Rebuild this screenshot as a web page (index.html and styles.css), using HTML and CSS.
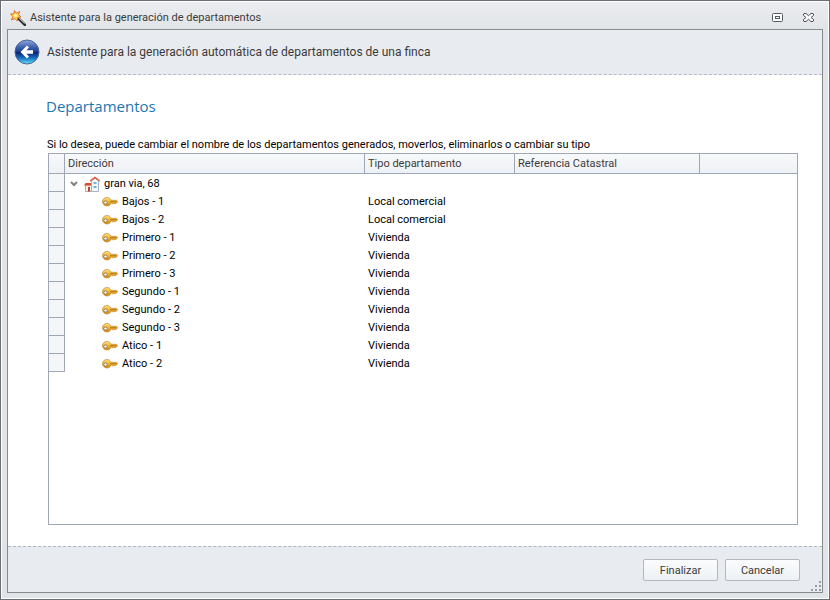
FILE: index.html
```html
<!DOCTYPE html>
<html lang="es">
<head>
    <meta charset="UTF-8">
    <title>Asistente para la generación de departamentos</title>
    <link rel="stylesheet" href="styles.css">
</head>
<body>

    <!-- shared icons -->
    <svg class="defs" width="0" height="0" aria-hidden="true">
        <defs>
            <linearGradient id="gold" x1="0" y1="0" x2="0" y2="1">
                <stop offset="0" stop-color="#fbe28a"/>
                <stop offset="0.5" stop-color="#f0b332"/>
                <stop offset="1" stop-color="#c98416"/>
            </linearGradient>
            <symbol id="key" viewBox="0 0 16 12">
                <path d="M5 1.500C2.300 1.500.5 3.300.5 5.500S2.300 10 5 10c1.900 0 3.300-1 4-2.800h.8l1 .9 1-1 1 1 1-1h.7L15.700 5.700 14.500 4.300H9C8.300 2.500 6.900 1.500 5 1.500z" fill="url(#gold)" stroke="#c58a25" stroke-width="0.7"/>
                <ellipse cx="3.500" cy="6.500" rx="1.700" ry="1.500" fill="#fff" stroke="#7d6a48" stroke-width="0.8"/>
                <path d="M8 5.700h6.500" stroke="#8f5d18" stroke-width="0.7"/>
            </symbol>
        </defs>
    </svg>

    <div class="window">
        <header class="titlebar">
            <svg class="wand" width="16" height="16" viewBox="0 0 16 16" aria-hidden="true">
                <path d="M8 8l7 7" stroke="#2f2f2f" stroke-width="2.500" stroke-linecap="round"/>
                <path d="M8.500 7.600l6 6" stroke="#b9b9b9" stroke-width="1"/>
                <path d="M4.500.5l1.700 2.700L9.700 1.500 8.500 4.700l2.500 2.100-3.100.7L7.300 11 5 8.500 1.500 10l1.300-3.500L.5 4l3.300-.3z" fill="#ffd83c" stroke="#e0532a" stroke-width="0.800"/>
                <circle cx="5.700" cy="5.500" r="1.500" fill="#fff7b8"/>
            </svg>
            <h1>Asistente para la generación de departamentos</h1>
            <button type="button" class="win-button" aria-label="Maximizar">
                <svg width="12" height="10" viewBox="0 0 12 10">
                    <rect x="0.500" y="0.500" width="10" height="8" rx="1" fill="#fff" stroke="#565b61"/>
                    <rect x="3.500" y="3.500" width="4" height="2" fill="#fff" stroke="#565b61"/>
                </svg>
            </button>
            <button type="button" class="win-button" aria-label="Cerrar">
                <svg width="12" height="10" viewBox="0 0 12 10">
                    <path d="M1 .5h2l2.500 2.200L8 .5h2l.5.5v1.500L8 4.500l2.500 2V8l-.5.5H8L5.500 6.300 3 8.500H1L.5 8V6.500l2.500-2-2.500-2V1z" fill="#fff" stroke="#4b4f54"/>
                </svg>
            </button>
        </header>

        <div class="wizard">
            <div class="wizard-header">
                <button type="button" class="back" aria-label="Atrás">
                    <svg width="26" height="26" viewBox="0 0 26 26">
                        <defs>
                            <linearGradient id="ball" x1="0" y1="0" x2="0" y2="1">
                                <stop offset="0" stop-color="#8fa9dc"/>
                                <stop offset="0.300" stop-color="#3f62ae"/>
                                <stop offset="0.480" stop-color="#1c3f92"/>
                                <stop offset="0.520" stop-color="#0a2472"/>
                                <stop offset="0.750" stop-color="#1a6fc0"/>
                                <stop offset="1" stop-color="#5fe6fb"/>
                            </linearGradient>
                        </defs>
                        <circle cx="13" cy="13" r="12" fill="url(#ball)" stroke="#50649c"/>
                        <path d="M6.500 13l6.500-6.500 2 2-2.600 2.700H19v3.600h-6.600l2.600 2.700-2 2z" fill="#fff"/>
                    </svg>
                </button>
                <p>Asistente para la generación automática de departamentos de una finca</p>
            </div>

            <main class="page">
                <h2>Departamentos</h2>
                <p class="hint">Si lo desea, puede cambiar el nombre de los departamentos generados, moverlos, eliminarlos o cambiar su tipo</p>

                <div class="grid">
                    <table>
                        <colgroup>
                            <col class="col-indicator">
                            <col class="col-address">
                            <col class="col-type">
                            <col class="col-ref">
                            <col>
                        </colgroup>
                        <thead>
                            <tr><th></th><th>Dirección</th><th>Tipo departamento</th><th>Referencia Catastral</th><th></th></tr>
                        </thead>
                        <tbody>
                            <tr>
                                <td class="indicator"></td>
                                <td>
                                    <div class="node root">
                                        <button type="button" class="toggle" aria-label="Contraer" aria-expanded="true">
                                            <svg width="8" height="6" viewBox="0 0 8 6"><path d="M1 1l3 3 3-3" fill="none" stroke="#7c8085" stroke-width="2"/></svg>
                                        </button>
                                        <svg width="16" height="16" viewBox="0 0 16 16" aria-hidden="true">
                                            <path d="M7.500 5L11 2l3.500 3v10.500h-7z" fill="#f4f7fa" stroke="#a9b6c6"/>
                                            <path d="M1.500 9h6v6.500h-6z" fill="#f6f2f0" stroke="#b5a9a5"/>
                                            <path d="M6 5.700V4.200L11 .4l4.800 3.800v1.500L11 2.500z" fill="#dd5a3c"/>
                                            <path d="M0 9.500L1.500 7H7v2.500z" fill="#d9502f"/>
                                            <path d="M9.500 6h3v2h-3zM9.500 10h3v2h-3z" fill="#6bb8d8"/>
                                            <path d="M4 11h2v4.500H4z" fill="#b0492e"/>
                                        </svg>
                                        gran via, 68
                                    </div>
                                </td>
                                <td></td><td></td><td></td>
                            </tr>
                            <tr><td class="indicator"></td><td><div class="node"><svg width="16" height="12"><use href="#key"/></svg>Bajos - 1</div></td><td>Local comercial</td><td></td><td></td></tr>
                            <tr><td class="indicator"></td><td><div class="node"><svg width="16" height="12"><use href="#key"/></svg>Bajos - 2</div></td><td>Local comercial</td><td></td><td></td></tr>
                            <tr><td class="indicator"></td><td><div class="node"><svg width="16" height="12"><use href="#key"/></svg>Primero - 1</div></td><td>Vivienda</td><td></td><td></td></tr>
                            <tr><td class="indicator"></td><td><div class="node"><svg width="16" height="12"><use href="#key"/></svg>Primero - 2</div></td><td>Vivienda</td><td></td><td></td></tr>
                            <tr><td class="indicator"></td><td><div class="node"><svg width="16" height="12"><use href="#key"/></svg>Primero - 3</div></td><td>Vivienda</td><td></td><td></td></tr>
                            <tr><td class="indicator"></td><td><div class="node"><svg width="16" height="12"><use href="#key"/></svg>Segundo - 1</div></td><td>Vivienda</td><td></td><td></td></tr>
                            <tr><td class="indicator"></td><td><div class="node"><svg width="16" height="12"><use href="#key"/></svg>Segundo - 2</div></td><td>Vivienda</td><td></td><td></td></tr>
                            <tr><td class="indicator"></td><td><div class="node"><svg width="16" height="12"><use href="#key"/></svg>Segundo - 3</div></td><td>Vivienda</td><td></td><td></td></tr>
                            <tr><td class="indicator"></td><td><div class="node"><svg width="16" height="12"><use href="#key"/></svg>Atico - 1</div></td><td>Vivienda</td><td></td><td></td></tr>
                            <tr><td class="indicator"></td><td><div class="node"><svg width="16" height="12"><use href="#key"/></svg>Atico - 2</div></td><td>Vivienda</td><td></td><td></td></tr>
                        </tbody>
                    </table>
                </div>
            </main>

            <footer class="actions">
                <button type="button" class="btn">Finalizar</button>
                <button type="button" class="btn">Cancelar</button>
                <svg class="grip" width="10" height="10" viewBox="0 0 10 10" aria-hidden="true">
                    <path d="M8 0h2v2H8zM4 4h2v2H4zM8 4h2v2H8zM0 8h2v2H0zM4 8h2v2H4zM8 8h2v2H8z" fill="#9a9ea4"/>
                </svg>
            </footer>
        </div>
    </div>

</body>
</html>
```
FILE: styles.css
```css
* {
    box-sizing: border-box;
}

body {
    margin: 0;
    font-family: Roboto, Tahoma, sans-serif;
    font-size: 11px;
    color: #000;
}

h1, h2, p {
    margin: 0;
    font-weight: normal;
}

button {
    font: inherit;
    color: inherit;
    padding: 0;
    border: none;
    background: none;
}

svg {
    display: block;
    flex: none;
}

.defs {
    position: absolute;
}

.window {
    display: flex;
    flex-direction: column;
    min-height: 100vh;
    padding: 1px 6px 6px;
    border: 1px solid #6a6d75;
    box-shadow: inset 0 0 0 1px #fff;
    background: linear-gradient(#ebedf1, #e1e4e6 30px, #e1e4e6);
}

.titlebar {
    display: flex;
    align-items: center;
    height: 27px;
    padding: 4px 8px 0 3px;
    color: #3b3b3b;
}

.titlebar h1 {
    flex: 1;
    margin-left: 4px;
    font-size: 11px;
}

.win-button {
    margin-left: 19px;
}

.wizard {
    flex: 1;
    display: flex;
    flex-direction: column;
    border: 1px solid #868b90;
    background: #fff;
}

.wizard-header {
    display: flex;
    align-items: center;
    gap: 7px;
    height: 45px;
    padding-left: 6px;
    border-bottom: 1px dashed #b4bac8;
    background: #e8ebf0;
    color: #3b3b3b;
    font-size: 12px;
}

.page {
    flex: 1;
    display: flex;
    flex-direction: column;
    padding: 19px 24px 21px 40px;
}

.page h2 {
    margin-left: -2px;
    color: #1c76b4;
    font-family: "Open Sans", "Segoe UI", sans-serif;
    font-size: 15px;
    line-height: 24px;
}

.hint {
    margin: 19px 0 1px -1px;
    line-height: 15px;
    white-space: nowrap;
}

.grid {
    flex: 1;
    border: 1px solid #a0a7b4;
}

table {
    width: 100%;
    table-layout: fixed;
    border-spacing: 0;
}

.col-indicator {
    width: 16px;
}

.col-address {
    width: 300px;
}

.col-type {
    width: 150px;
}

.col-ref {
    width: 185px;
}

th {
    height: 20px;
    padding: 0 3px;
    border-right: 1px solid #a0a7b4;
    border-bottom: 1px solid #a0a7b4;
    background: linear-gradient(#f7f9fb, #eef1f5);
    color: #3b3b3b;
    font-weight: normal;
    text-align: left;
}

th:last-child {
    border-right: none;
}

td {
    height: 18px;
    padding: 2px 3px 0;
    line-height: 16px;
}

.indicator {
    border-right: 1px solid #a0a7b4;
    border-bottom: 1px solid #a0a7b4;
    background: #f5f6f8;
}

.node {
    display: flex;
    align-items: center;
    gap: 4px;
    padding-left: 34px;
}

.root {
    padding-left: 2px;
}

.toggle {
    margin-right: 2px;
}

.actions {
    position: relative;
    display: flex;
    gap: 7px;
    height: 46px;
    padding: 12px 22px 0;
    justify-content: flex-end;
    border-top: 1px dashed #b0b6c0;
    background: #e8ebf0;
}

.btn {
    width: 75px;
    height: 22px;
    border: 1px solid #b4b8be;
    border-radius: 2px;
    background: linear-gradient(#fafcfd, #eef1f4);
    color: #3b3b3b;
}

.grip {
    position: absolute;
    right: 1px;
    bottom: 1px;
}
```
